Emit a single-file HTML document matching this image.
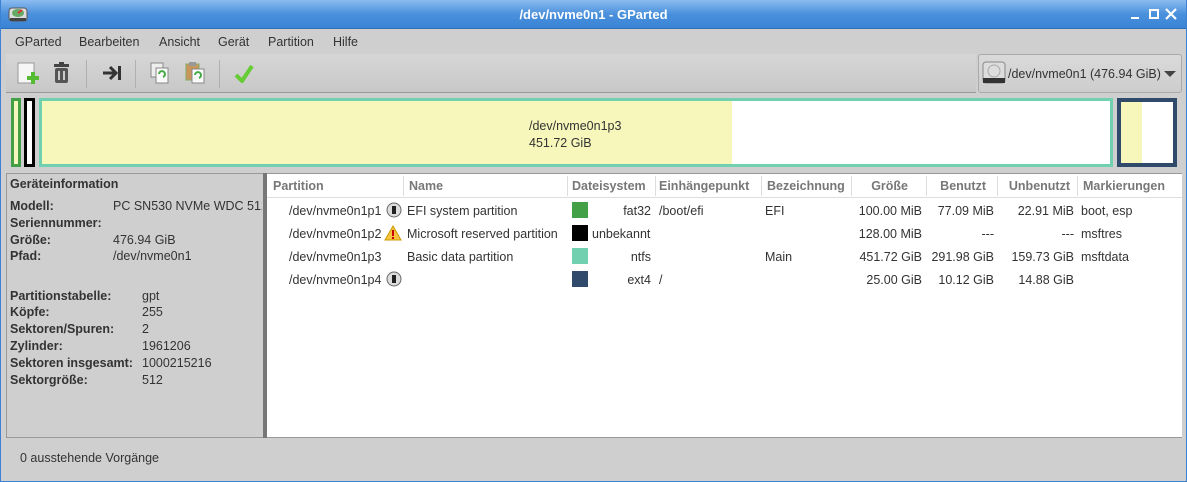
<!DOCTYPE html>
<html><head><meta charset="utf-8"><style>
*{margin:0;padding:0;box-sizing:border-box}
body{width:1187px;height:482px;overflow:hidden;background:#cfcfcf;font-family:"Liberation Sans","DejaVu Sans",sans-serif;font-size:12.5px;color:#333;position:relative}
.a{position:absolute;white-space:nowrap}
div.a{line-height:16px}
.b{font-weight:bold}
.r{text-align:right}
#frame{position:absolute;left:0;top:0;width:1187px;height:482px;border:1px solid #3b82d4;border-top:none;pointer-events:none}
#title{position:absolute;left:0;top:0;width:1187px;height:29px;background:linear-gradient(#8cbcf0,#4a90dc 50%,#3a84d6);border-bottom:1px solid #2d6fb8}
.hdr{color:#777;font-weight:bold}
.sw{position:absolute;width:16px;height:16px}
</style></head><body>
<div id="title"></div>
<svg class="a" style="left:8px;top:5px" width="20" height="18"><rect x="1" y="3" width="18" height="13" rx="3" fill="#ddd" stroke="#555"/><ellipse cx="10" cy="8" rx="6" ry="4" fill="#6a6"/><path d="M10 8 L14 5" stroke="#d33" stroke-width="2"/><rect x="2" y="13" width="16" height="3" fill="#444"/></svg>
<div class="a b" style="left:0;width:1187px;text-align:center;top:7px;color:#fff;font-size:13px">/dev/nvme0n1 - GParted</div>
<div class="a" style="left:1131px;top:17px;width:8px;height:2px;background:#fff"></div>
<div class="a" style="left:1149px;top:9px;width:10px;height:10px;border:2px solid #fff"></div>
<svg class="a" style="left:1165px;top:8px" width="12" height="12"><path d="M1 1 L11 11 M11 1 L1 11" stroke="#fff" stroke-width="2.2"/></svg>

<div class="a" style="left:15px;top:34px">GParted</div>
<div class="a" style="left:79px;top:34px">Bearbeiten</div>
<div class="a" style="left:159px;top:34px">Ansicht</div>
<div class="a" style="left:218px;top:34px">Gerät</div>
<div class="a" style="left:268px;top:34px">Partition</div>
<div class="a" style="left:333px;top:34px">Hilfe</div>

<div class="a" style="left:6px;top:54px;width:970px;height:39px;background:linear-gradient(#d6d6d6,#c8c8c8);border-bottom:1px solid #999"></div>
<svg class="a" style="left:16px;top:60px" width="26" height="26"><rect x="2" y="3" width="16" height="20" fill="#f6f6f6" stroke="#999"/><rect x="15" y="12" width="4" height="12" fill="#5b3"/><rect x="11" y="16" width="12" height="4" fill="#5b3"/></svg>
<svg class="a" style="left:52px;top:62px" width="20" height="22"><rect x="2" y="2" width="15" height="3" fill="#444"/><rect x="7" y="0" width="5" height="3" fill="#444"/><rect x="3" y="6" width="13" height="15" rx="2" fill="#555"/><rect x="6" y="9" width="2" height="9" fill="#ccc"/><rect x="11" y="9" width="2" height="9" fill="#ccc"/></svg>
<div class="a" style="left:86px;top:60px;width:1px;height:28px;background:#b0b0b0"></div>
<svg class="a" style="left:101px;top:64px" width="22" height="18"><path d="M2 9 H14 M9 3 L15 9 L9 15" stroke="#333" stroke-width="3" fill="none"/><rect x="17" y="2" width="3" height="14" fill="#333"/></svg>
<div class="a" style="left:135px;top:60px;width:1px;height:28px;background:#b0b0b0"></div>
<svg class="a" style="left:150px;top:62px" width="20" height="22"><rect x="1" y="1" width="12" height="14" fill="#eee" stroke="#888"/><rect x="6" y="6" width="12" height="15" fill="#fafafa" stroke="#888"/><path d="M9 12 a3 3 0 1 1 4 3" stroke="#4a4" stroke-width="2" fill="none"/></svg>
<svg class="a" style="left:185px;top:61px" width="20" height="23"><rect x="1" y="3" width="13" height="16" fill="#c8955a" stroke="#8a6"/><rect x="4" y="1" width="7" height="4" fill="#999"/><rect x="7" y="8" width="12" height="14" fill="#fafafa" stroke="#888"/><path d="M10 14 a3 3 0 1 1 4 3" stroke="#4a4" stroke-width="2" fill="none"/></svg>
<div class="a" style="left:219px;top:60px;width:1px;height:28px;background:#b0b0b0"></div>
<svg class="a" style="left:233px;top:63px" width="22" height="22"><path d="M3 12 L9 18 L19 3" stroke="#6c3" stroke-width="4" fill="none" stroke-linejoin="round"/></svg>

<div class="a" style="left:978px;top:54px;width:204px;height:39px;border:1px solid #aaa;border-radius:3px;background:linear-gradient(#dadada,#cdcdcd)"></div>
<svg class="a" style="left:982px;top:61px" width="24" height="24"><rect x="1" y="1" width="22" height="21" rx="3" fill="#ddd" stroke="#888"/><circle cx="12" cy="10" r="6" fill="none" stroke="#aaa"/><rect x="1" y="17" width="22" height="5" fill="#333"/></svg>
<div class="a" style="left:1008px;top:66px;font-size:12.5px">/dev/nvme0n1 (476.94 GiB)</div>
<div class="a" style="left:1164px;top:71px;border:6px solid transparent;border-top:6px solid #444;border-bottom:none"></div>

<!-- graph -->
<div class="a" style="left:11px;top:98px;width:10px;height:69px;border:3px solid #43a047;background:#f7f7bb"></div>
<div class="a" style="left:24px;top:98px;width:11px;height:69px;border:3px solid #000;background:#fff"></div>
<div class="a" style="left:39px;top:98px;width:1074px;height:69px;border:3px solid #70d0b0;background:linear-gradient(90deg,#f7f7bb 0,#f7f7bb 690px,#fff 690px)"></div>
<div class="a" style="left:529px;top:118px">/dev/nvme0n1p3</div>
<div class="a" style="left:529px;top:135px">451.72 GiB</div>
<div class="a" style="left:1117px;top:98px;width:60px;height:69px;border:4px solid #2f4a6a;background:linear-gradient(90deg,#f7f7bb 0,#f7f7bb 21px,#fff 21px)"></div>

<!-- left panel -->
<div class="a" style="left:6px;top:173px;width:258px;height:265px;border:1px solid #999;border-right:1px dashed #aaa"></div>
<div class="a" style="left:263px;top:173px;width:4px;height:265px;background:#777"></div>
<div class="a b" style="left:10px;top:176px">Geräteinformation</div>
<div class="a b" style="left:10px;top:198px">Modell:</div><div class="a" style="left:113px;top:198px;width:149px;overflow:hidden">PC SN530 NVMe WDC 512G</div>
<div class="a b" style="left:10px;top:215px">Seriennummer:</div>
<div class="a b" style="left:10px;top:232px">Größe:</div><div class="a" style="left:113px;top:232px">476.94 GiB</div>
<div class="a b" style="left:10px;top:248px">Pfad:</div><div class="a" style="left:113px;top:248px">/dev/nvme0n1</div>
<div class="a b" style="left:10px;top:288px">Partitionstabelle:</div><div class="a" style="left:142px;top:288px">gpt</div>
<div class="a b" style="left:10px;top:304px">Köpfe:</div><div class="a" style="left:142px;top:304px">255</div>
<div class="a b" style="left:10px;top:321px">Sektoren/Spuren:</div><div class="a" style="left:142px;top:321px">2</div>
<div class="a b" style="left:10px;top:338px">Zylinder:</div><div class="a" style="left:142px;top:338px">1961206</div>
<div class="a b" style="left:10px;top:355px">Sektoren insgesamt:</div><div class="a" style="left:142px;top:355px">1000215216</div>
<div class="a b" style="left:10px;top:372px">Sektorgröße:</div><div class="a" style="left:142px;top:372px">512</div>

<!-- table -->
<div class="a" style="left:267px;top:173px;width:915px;height:265px;background:#fff;border-top:1px solid #999;border-bottom:1px solid #999"></div>
<div class="a" style="left:267px;top:174px;width:915px;height:24px;border-bottom:1px solid #ddd"></div>
<div class="a hdr" style="left:273px;top:178px">Partition</div>
<div class="a hdr" style="left:409px;top:178px">Name</div>
<div class="a hdr" style="left:572px;top:178px">Dateisystem</div>
<div class="a hdr" style="left:659px;top:178px">Einhängepunkt</div>
<div class="a hdr" style="left:767px;top:178px">Bezeichnung</div>
<div class="a hdr r" style="left:851px;width:57px;top:178px">Größe</div>
<div class="a hdr r" style="left:926px;width:60px;top:178px">Benutzt</div>
<div class="a hdr r" style="left:997px;width:73px;top:178px">Unbenutzt</div>
<div class="a hdr" style="left:1083px;top:178px">Markierungen</div>
<div class="a" style="left:403px;top:176px;width:1px;height:20px;background:#ddd"></div>
<div class="a" style="left:567px;top:176px;width:1px;height:20px;background:#ddd"></div>
<div class="a" style="left:655px;top:176px;width:1px;height:20px;background:#ddd"></div>
<div class="a" style="left:761px;top:176px;width:1px;height:20px;background:#ddd"></div>
<div class="a" style="left:851px;top:176px;width:1px;height:20px;background:#ddd"></div>
<div class="a" style="left:926px;top:176px;width:1px;height:20px;background:#ddd"></div>
<div class="a" style="left:997px;top:176px;width:1px;height:20px;background:#ddd"></div>
<div class="a" style="left:1077px;top:176px;width:1px;height:20px;background:#ddd"></div>

<!-- rows -->
<div class="a" style="left:289px;top:203px">/dev/nvme0n1p1</div>
<svg class="a" style="left:386px;top:202px" width="16" height="16"><circle cx="8" cy="8" r="7" fill="#ddd" stroke="#666"/><rect x="6" y="4" width="4" height="8" fill="#222"/></svg>
<div class="a" style="left:407px;top:203px">EFI system partition</div>
<div class="sw" style="left:572px;top:202px;background:#43a047"></div>
<div class="a r" style="left:590px;width:61px;top:203px">fat32</div>
<div class="a" style="left:659px;top:203px">/boot/efi</div>
<div class="a" style="left:765px;top:203px">EFI</div>
<div class="a r" style="left:851px;width:71px;top:203px">100.00 MiB</div>
<div class="a r" style="left:926px;width:68px;top:203px">77.09 MiB</div>
<div class="a r" style="left:997px;width:77px;top:203px">22.91 MiB</div>
<div class="a" style="left:1081px;top:203px">boot, esp</div>

<div class="a" style="left:289px;top:226px">/dev/nvme0n1p2</div>
<svg class="a" style="left:384px;top:225px" width="18" height="16"><path d="M9 1 L17 15 H1 Z" fill="#f5c542" stroke="#c90"/><rect x="8" y="5" width="2" height="6" fill="#c00"/><rect x="8" y="12" width="2" height="2" fill="#c00"/></svg>
<div class="a" style="left:407px;top:226px">Microsoft reserved partition</div>
<div class="sw" style="left:572px;top:225px;background:#000"></div>
<div class="a" style="left:592px;top:226px">unbekannt</div>
<div class="a r" style="left:851px;width:71px;top:226px">128.00 MiB</div>
<div class="a r" style="left:926px;width:68px;top:226px">---</div>
<div class="a r" style="left:997px;width:77px;top:226px">---</div>
<div class="a" style="left:1081px;top:226px">msftres</div>

<div class="a" style="left:289px;top:249px">/dev/nvme0n1p3</div>
<div class="a" style="left:407px;top:249px">Basic data partition</div>
<div class="sw" style="left:572px;top:248px;background:#70d0b0"></div>
<div class="a r" style="left:590px;width:61px;top:249px">ntfs</div>
<div class="a" style="left:765px;top:249px">Main</div>
<div class="a r" style="left:851px;width:71px;top:249px">451.72 GiB</div>
<div class="a r" style="left:926px;width:68px;top:249px">291.98 GiB</div>
<div class="a r" style="left:997px;width:77px;top:249px">159.73 GiB</div>
<div class="a" style="left:1081px;top:249px">msftdata</div>

<div class="a" style="left:289px;top:272px">/dev/nvme0n1p4</div>
<svg class="a" style="left:386px;top:271px" width="16" height="16"><circle cx="8" cy="8" r="7" fill="#ddd" stroke="#666"/><rect x="6" y="4" width="4" height="8" fill="#222"/></svg>
<div class="sw" style="left:572px;top:271px;background:#2f4a6a"></div>
<div class="a r" style="left:590px;width:61px;top:272px">ext4</div>
<div class="a" style="left:659px;top:272px">/</div>
<div class="a r" style="left:851px;width:71px;top:272px">25.00 GiB</div>
<div class="a r" style="left:926px;width:68px;top:272px">10.12 GiB</div>
<div class="a r" style="left:997px;width:77px;top:272px">14.88 GiB</div>

<div class="a" style="left:20px;top:450px">0 ausstehende Vorgänge</div>
<div id="frame"></div>
</body></html>
